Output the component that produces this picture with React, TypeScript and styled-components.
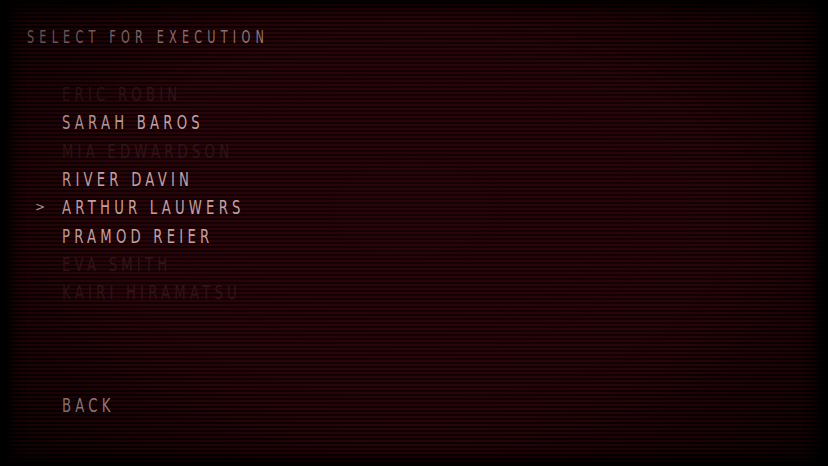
import React from "react";
import styled, { createGlobalStyle } from "styled-components";

const Global = createGlobalStyle`
  html, body { margin: 0; padding: 0; background: #000; }
  #root { width: 828px; height: 466px; }
`;

const Screen = styled.div`
  position: relative;
  width: 828px;
  height: 466px;
  box-sizing: border-box;
  overflow: hidden;
  background:
    repeating-linear-gradient(
      to bottom,
      rgba(48, 5, 10, 0.75) 0px,
      rgba(48, 5, 10, 0.75) 2px,
      rgba(0, 0, 0, 0) 2px,
      rgba(0, 0, 0, 0) 4px
    ),
    radial-gradient(ellipse 75% 80% at 50% 45%, #150305 0%, #110203 55%, #080101 85%, #030000 100%);
  font-family: "DejaVu Sans", "Liberation Sans", sans-serif;
  display: flex;
  flex-direction: column;
  padding: 26px 0 0 27px;

  &::after {
    content: "";
    position: absolute;
    inset: 0;
    pointer-events: none;
    background: radial-gradient(ellipse 70% 75% at 50% 48%, rgba(0,0,0,0) 55%, rgba(0,0,0,0.55) 100%);
    box-shadow: inset 16px 0 12px -4px #000, inset -16px 0 12px -4px #000,
      inset 0 10px 14px -6px #000, inset 0 -10px 14px -6px #000;
  }
`;

/* tall, narrow display lettering */
const Label = styled.span<{ $spacing: number }>`
  display: inline-block;
  white-space: nowrap;
  transform: scaleX(0.66);
  transform-origin: left center;
  letter-spacing: ${(p) => p.$spacing}px;
`;

const Title = styled.h1`
  margin: 0;
  font-weight: 400;
  font-size: 17px;
  line-height: 22px;
  color: #9e7d81;
`;

const List = styled.ul`
  list-style: none;
  margin: 32px 0 0 0;
  padding: 0;
  display: flex;
  flex-direction: column;
`;

const Row = styled.li<{ $enabled: boolean }>`
  display: flex;
  align-items: center;
  height: 28.3px;
  font-size: 20px;
  color: ${(p) => (p.$enabled ? "#c3a0a4" : "#31141a")};
`;

const Cursor = styled.span<{ $on: boolean }>`
  width: 35px;
  padding-left: 8px;
  box-sizing: border-box;
  font-size: 12px;
  color: #c3a0a4;
  visibility: ${(p) => (p.$on ? "visible" : "hidden")};
`;

const Back = styled.div`
  margin-top: auto;
  margin-bottom: 49px;
  padding-left: 35px;
  font-size: 20px;
  color: #bd9a9e;
`;

const people = [
  { name: "ERIC ROBIN", enabled: false },
  { name: "SARAH BAROS", enabled: true },
  { name: "MIA EDWARDSON", enabled: false },
  { name: "RIVER DAVIN", enabled: true },
  { name: "ARTHUR LAUWERS", enabled: true, selected: true },
  { name: "PRAMOD REIER", enabled: true },
  { name: "EVA SMITH", enabled: false },
  { name: "KAIRI HIRAMATSU", enabled: false },
];

export default function App() {
  return (
    <>
      <Global />
      <Screen>
        <Title>
          <Label $spacing={7.9}>SELECT FOR EXECUTION</Label>
        </Title>
        <List>
          {people.map((p) => (
            <Row key={p.name} $enabled={p.enabled}>
              <Cursor $on={!!p.selected}>&gt;</Cursor>
              <Label $spacing={6.4}>{p.name}</Label>
            </Row>
          ))}
        </List>
        <Back>
          <Label $spacing={6.4}>BACK</Label>
        </Back>
      </Screen>
    </>
  );
}
